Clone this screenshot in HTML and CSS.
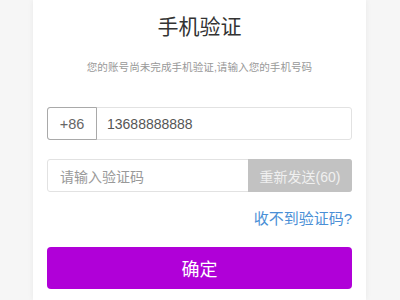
FILE: index.html
```html
<!DOCTYPE html>
<html lang="zh-CN">
<head>
<meta charset="utf-8">
<title>手机验证</title>
<link rel="stylesheet" href="styles.css">
</head>
<body>
<div class="page">
  <div class="card">
    <h1 class="title">手机验证</h1>
    <p class="subtitle">您的账号尚未完成手机验证,请输入您的手机号码</p>
    <div class="row phone-row">
      <span class="prefix">+86</span>
      <span class="phone">13688888888</span>
    </div>
    <div class="row code-row">
      <span class="code-input">请输入验证码</span>
      <span class="resend">重新发送(60)</span>
    </div>
    <div class="help"><a class="help-link">收不到验证码?</a></div>
    <div class="submit">确定</div>
  </div>
</div>
</body>
</html>
```

FILE: styles.css
```css
html, body {
  margin: 0;
  padding: 0;
  height: 100%;
  background: #f6f6f6;
  font-family: "Liberation Sans", "Noto Sans CJK SC", sans-serif;
}
.page {
  display: flex;
  justify-content: center;
  height: 300px;
  overflow: hidden;
}
.card {
  width: 333px;
  box-sizing: border-box;
  background: #fff;
  padding: 12px 14px 0;
  box-shadow: 0 0 6px rgba(0,0,0,0.06);
  display: flex;
  flex-direction: column;
  margin-left: -1px;
}
.title {
  margin: 0;
  font-size: 21px;
  line-height: 30px;
  font-weight: normal;
  color: #333;
  text-align: center;
}
.subtitle {
  margin: 17px 0 0;
  font-size: 10.6px;
  line-height: 16px;
  color: #999;
  text-align: center;
}
.row {
  display: flex;
  height: 33px;
  box-sizing: border-box;
  border: 1px solid #e2e2e2;
  border-radius: 3px;
  font-size: 14px;
  align-items: stretch;
}
.phone-row {
  margin-top: 32px;
}
.prefix {
  width: 50px;
  box-sizing: border-box;
  margin: -1px 0 -1px -1px;
  border: 1px solid #a9a9a9;
  border-radius: 3px 0 0 3px;
  display: flex;
  align-items: center;
  justify-content: center;
  color: #666;
  font-size: 14.5px;
}
.phone {
  display: flex;
  align-items: center;
  padding-left: 10px;
  color: #555;
}
.code-row {
  margin-top: 19px;
}
.code-input {
  flex: 1;
  display: flex;
  align-items: center;
  padding-left: 12px;
  color: #999;
}
.resend {
  width: 104px;
  margin: -1px -1px -1px 0;
  border-radius: 0 3px 3px 0;
  background: #c2c2c2;
  color: #f0f0f0;
  display: flex;
  align-items: center;
  justify-content: center;
}
.help {
  margin-top: 17px;
  text-align: right;
  font-size: 15px;
  line-height: 20px;
}
.help-link {
  color: #4a8fd6;
}
.submit {
  margin-top: 18px;
  height: 42px;
  border-radius: 4px;
  background: #b000d8;
  color: #fff;
  font-size: 18px;
  display: flex;
  align-items: center;
  justify-content: center;
}
```
